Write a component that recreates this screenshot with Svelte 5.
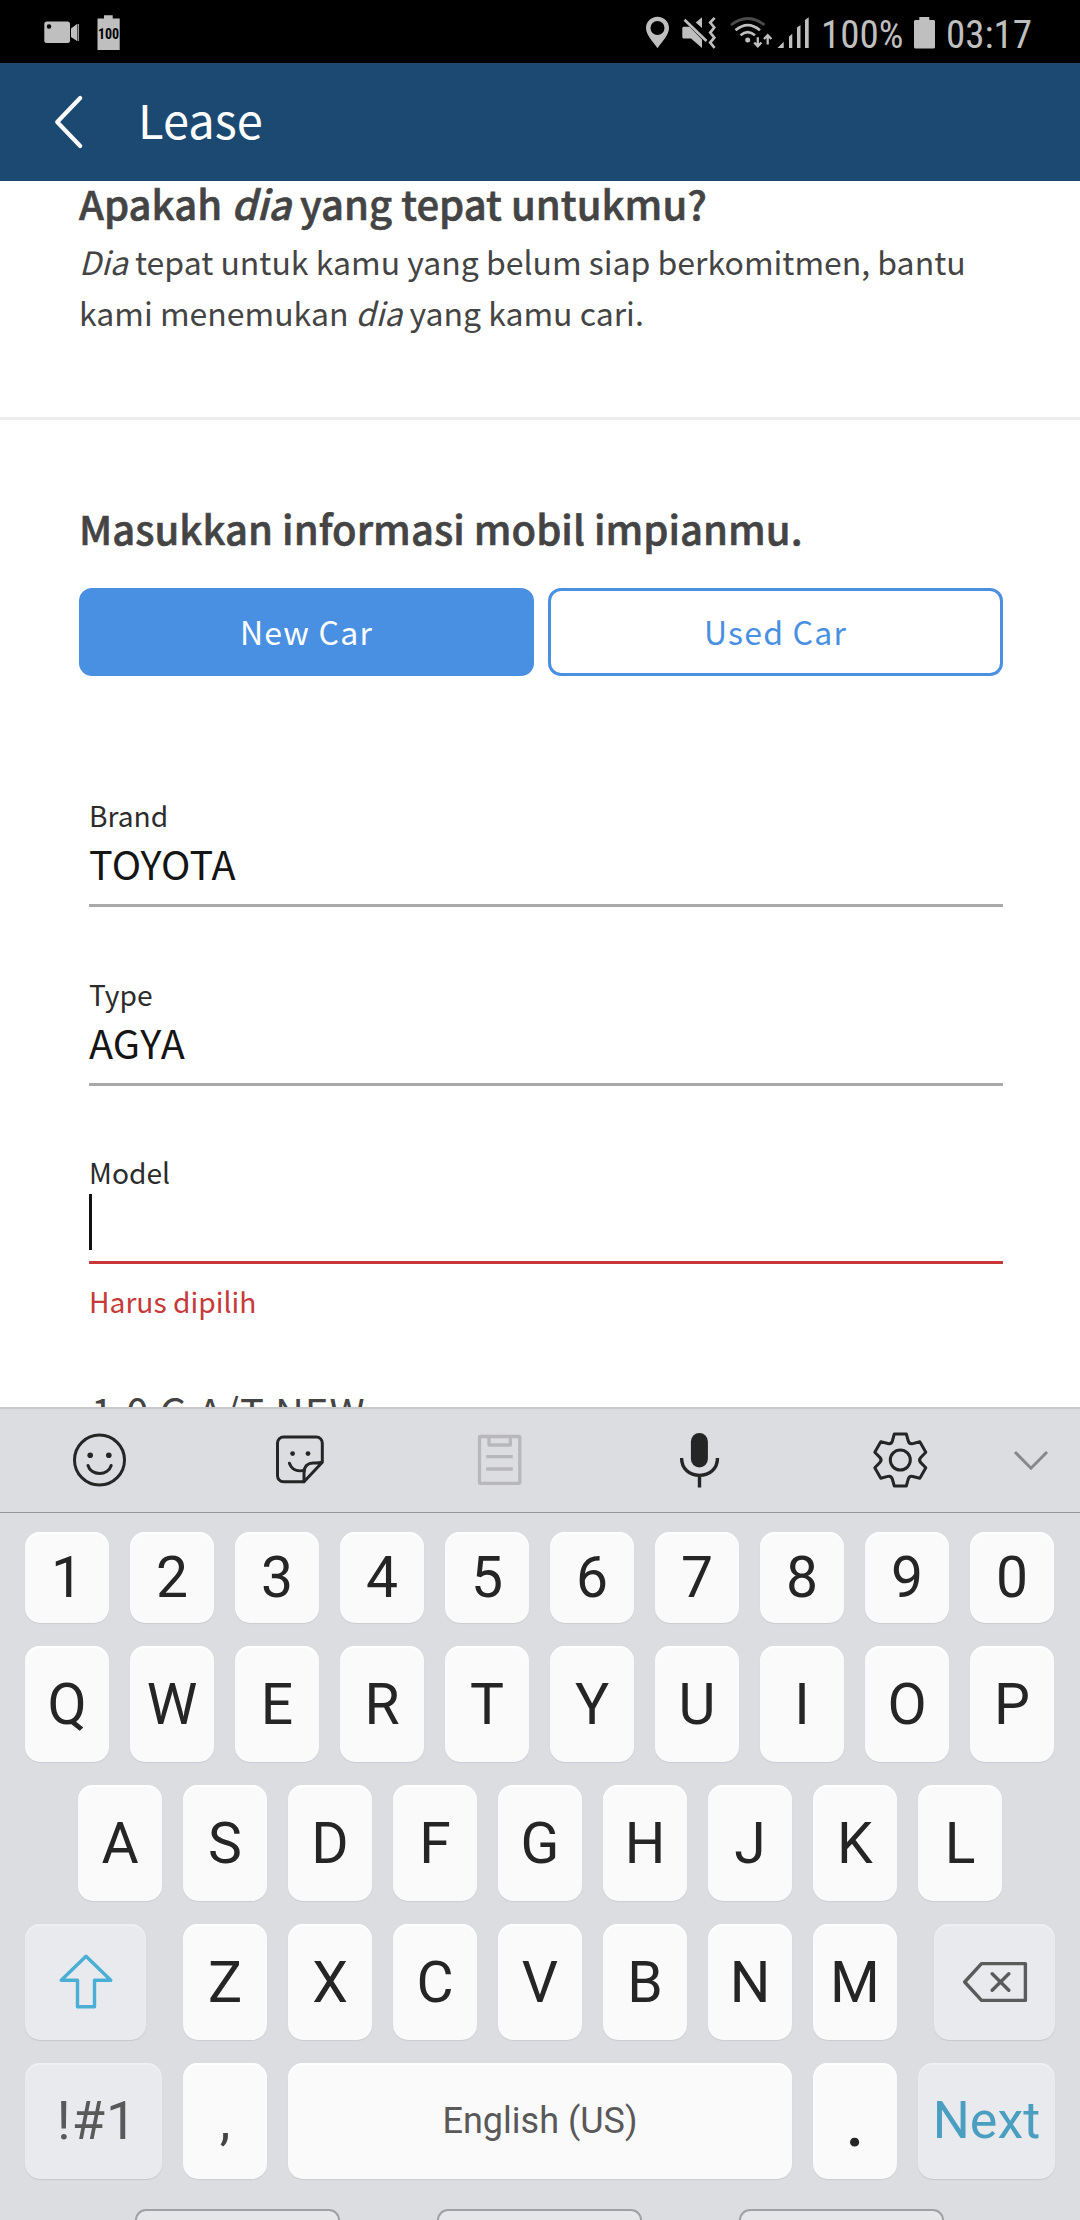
<script>
  const numbers = [...'1234567890'];
  const topRow = [...'QWERTYUIOP'];
  const homeRow = [...'ASDFGHJKL'];
  const lowerRow = [...'ZXCVBNM'];

  // Six-toothed gear outline, centred on the origin.
  const tooth = [[-6, -26], [6, -26], [8, -19], [9, -15.6], [12.5, -16.4]];
  const turn = ([x, y], i) => {
    const a = (i * Math.PI) / 3;
    return `${(x * Math.cos(a) - y * Math.sin(a)).toFixed(2)} ${(x * Math.sin(a) + y * Math.cos(a)).toFixed(2)}`;
  };
  const gear =
    [0, 1, 2, 3, 4, 5]
      .map((i) => {
        const p = tooth.map((t) => turn(t, i));
        return `${i ? 'L' : 'M'}${p[0]} L${p[1]} L${p[2]} Q${p[3]} ${p[4]}`;
      })
      .join(' ') + 'Z';
</script>

<div class="screen">
  <div class="status">
    <svg class="cam" width="36" height="40" viewBox="0 0 36 40">
      <path fill-rule="evenodd" d="M2.8 6.5H23.5a2.5 2.5 0 0 1 2.5 2.5V25.5a2.5 2.5 0 0 1-2.5 2.5H2.8A2.5 2.5 0 0 1 .3 25.5V9A2.5 2.5 0 0 1 2.8 6.5ZM5 9.2a2.3 2.3 0 1 0 0 4.6a2.3 2.3 0 0 0 0-4.6Z" />
      <path d="M27 13.5L33 9V26L27 22ZM33.6 9H34.8V26H33.6Z" />
    </svg>
    <svg class="batt-note" width="23" height="40" viewBox="0 0 23 40">
      <path d="M.5 3.5H7V.3H15.7V3.5H22.7V35H.5Z" />
      <text x="11.6" y="24.1" text-anchor="middle">100</text>
    </svg>
    <svg class="pin" width="24" height="40" viewBox="0 0 24 40">
      <path fill-rule="evenodd" d="M11.5 1.8C5 1.8 0 6.8 0 13C0 20 6.5 26 11.5 33.3C16.5 26 23 20 23 13C23 6.8 18 1.8 11.5 1.8ZM11.5 6a7 7 0 1 1 0 14a7 7 0 0 1 0-14Z" />
    </svg>
    <svg class="mute" width="34" height="40" viewBox="0 0 34 40">
      <path d="M1.3 11.8H7.5L20 24.5V33L9 23.5H1.3L.3 22.5V12.8ZM13.7 7.5L20 2.3V13Z" />
      <path class="line" d="M2.5 4.8L24.5 26M32.6 2.8L28.2 7.6L32.3 12.5L28.2 17.6L32.3 22.6L28.2 27.6L32.6 32.8" />
    </svg>
    <svg class="wifi" width="42" height="40" viewBox="0 0 42 40">
      <path class="line dim" d="M1 10Q17.7 -3 34.5 10" />
      <path class="line" d="M5.5 15.3Q17.7 5 30 15.3M10.5 20.3Q17.7 14 25 20.3" />
      <circle cx="17.7" cy="25" r="2.5" />
      <path class="line thin" d="M27.8 22.3V31M24.2 27.5L27.8 31.4L31.4 27.5M37.7 29.5V20.5M34 24L37.7 20.2L41.4 24" />
    </svg>
    <svg class="signal" width="32" height="40" viewBox="0 0 32 40">
      <path d="M.5 33H6.7V26.7ZM12 33V21.5L15.3 18.8V33ZM20 33V12.5L23.5 10V33ZM28 33V5L31.7 2.3V33Z" />
    </svg>
    <span class="percent">100%</span>
    <svg class="batt" width="21" height="40" viewBox="0 0 21 40">
      <path d="M1 5H5.3V2H15.3V5H20L21 6V32.5L20 33.5H1L0 32.5V6Z" />
    </svg>
    <span class="clock">03:17</span>
  </div>

  <header>
    <svg width="30" height="56" viewBox="0 0 30 56"><path d="M26.2 4L3.2 28L26.2 52" /></svg>
    <span class="title">Lease</span>
  </header>

  <main>
    <section class="intro">
      <h1>Apakah <em>dia</em> yang tepat untukmu?</h1>
      <p><em>Dia</em> tepat untuk kamu yang belum siap berkomitmen, bantu<br />kami menemukan <em>dia</em> yang kamu cari.</p>
    </section>
    <section class="form">
      <h2>Masukkan informasi mobil impianmu.</h2>
      <div class="toggle">
        <button class="on">New Car</button>
        <button>Used Car</button>
      </div>
      <div class="fields">
        <div class="field"><label for="brand">Brand</label><div class="value" id="brand">TOYOTA</div></div>
        <div class="field"><label for="type">Type</label><div class="value" id="type">AGYA</div></div>
        <div class="field error"><label for="model">Model</label><div class="value" id="model"><i class="caret"></i></div></div>
        <div class="message">Harus dipilih</div>
        <div class="option">1.0 G A/T NEW</div>
      </div>
    </section>
  </main>

  <div class="keyboard">
    <div class="tools">
      <svg viewBox="0 0 60 60">
        <circle cx="29.5" cy="30" r="25" />
        <path d="M18 35.5C21 46 38 46 41.2 35.5" />
        <circle class="fill" cx="20.2" cy="25.2" r="2.8" /><circle class="fill" cx="38.8" cy="25.2" r="2.8" />
      </svg>
      <svg viewBox="0 0 60 60">
        <path d="M34 51.8H13.5a6 6 0 0 1-6-6V13a6 6 0 0 1 6-6H46.3a6 6 0 0 1 6 6V32.2L34 51.8V43C34 36 38 33 43 33C47 33 50 33 52.3 32.2" />
        <path d="M19.4 33.2C21.5 39 27 42 34 40.4" />
        <circle class="fill" cx="22.6" cy="23.6" r="2.4" /><circle class="fill" cx="38" cy="23.6" r="2.4" />
      </svg>
      <svg class="off" viewBox="0 0 60 60">
        <rect x="9.5" y="6.5" width="40.3" height="46.8" rx="1" />
        <path d="M19 7V15H40.3V7M16.2 26.6H42.8M16.2 39H42.8" />
      </svg>
      <svg viewBox="0 0 60 60">
        <rect class="fill" x="20.9" y="3" width="17" height="34.5" rx="8.5" />
        <path class="butt" d="M11.6 28C11.6 39 19.5 45.4 29.5 45.4S47.5 39 47.5 28M29.5 45.4V57.5" />
      </svg>
      <svg viewBox="0 0 60 60">
        <g transform="translate(30.3 30)"><path d={gear} /><circle r="10" /></g>
      </svg>
      <svg class="hide" viewBox="0 0 60 60"><path d="M14 22L30 38.2L46 22" /></svg>
    </div>

    <div class="keys">
      <div class="row short">{#each numbers as k}<button class="key">{k}</button>{/each}</div>
      <div class="row">{#each topRow as k}<button class="key">{k}</button>{/each}</div>
      <div class="row home">{#each homeRow as k}<button class="key">{k}</button>{/each}</div>
      <div class="row">
        <button class="key fn shift" aria-label="Shift">
          <svg width="60" height="60" viewBox="0 0 60 60"><path d="M30 4.3L54.8 28.3H38.5V54.7H21.5V28.3H5.2Z" /></svg>
        </button>
        {#each lowerRow as k}<button class="key">{k}</button>{/each}
        <button class="key fn back" aria-label="Backspace">
          <svg width="68" height="48" viewBox="0 0 68 48"><path d="M3.7 24L20.5 5.6H64.4V42.4H20.5ZM31.2 15.8L47.8 32.3M47.8 15.8L31.2 32.3" /></svg>
        </button>
      </div>
      <div class="row">
        <button class="key fn sym">!#1</button>
        <button class="key comma">,</button>
        <button class="key space">English (US)</button>
        <button class="key dot">.</button>
        <button class="key fn next">Next</button>
      </div>
    </div>
    <div class="nav"><i></i><i></i><i></i></div>
  </div>
</div>

<style>
  :global(body) { margin: 0; background: #fff; }
  .screen {
    width: 1080px; height: 2220px; overflow: hidden; background: #fff;
    display: flex; flex-direction: column;
    font-family: "Noto Sans CJK JP", "Noto Sans", sans-serif;
  }
  .screen > * { flex-shrink: 0; }
  button { font: inherit; padding: 0; margin: 0; border: 0; }

  .status {
    height: 63px; box-sizing: border-box; padding: 7px 0 0 44px; background: #000; color: #bfbfbf;
    display: flex; align-items: center; overflow: hidden;
    font: 39px/50px "Roboto Condensed", Roboto, sans-serif;
  }
  .status > * { flex: none; }
  .status svg { fill: #bfbfbf; }
  .status .line { fill: none; stroke: #bfbfbf; stroke-width: 2.7; }
  .status .dim { stroke: #4a4a4a; }
  .status .thin { stroke-width: 2.3; }
  .status text { font: 700 14px "Roboto Condensed", Roboto, sans-serif; fill: #000; }
  .batt-note { margin-left: 17px; }
  .pin { margin-left: 526px; }
  .mute { margin-left: 12px; }
  .wifi { margin-left: 14px; }
  .signal { margin-left: 5px; }
  .percent { margin-left: 12px; width: 93px; }
  .clock { margin-left: 11px; }

  header {
    height: 118px; background: #1c4971; color: #fff;
    display: flex; align-items: center; padding-left: 54px; box-sizing: border-box;
  }
  header path { fill: none; stroke: #fafafa; stroke-width: 4.2; stroke-linecap: round; stroke-linejoin: round; }
  .title { font-size: 47px; line-height: 60px; margin-left: 54px; padding-bottom: 7px; }

  main { height: 1226px; overflow: hidden; color: #444; }
  .intro { padding: 0 79px 79px; border-bottom: 3px solid #ededed; }
  h1, h2 {
    margin: 0; font-size: 40px; font-weight: 500; letter-spacing: 0.04px;
    -webkit-text-stroke: 0.6px #444; white-space: nowrap;
  }
  h1 { line-height: 45px; }
  p { margin: 10px 0 0; font-size: 32px; line-height: 51px; white-space: nowrap; }
  .form { padding: 79px 77px 0 79px; }
  h2 { line-height: 58px; }
  .toggle { display: flex; gap: 14px; margin-top: 31px; }
  .toggle button {
    flex: 1; height: 88px; box-sizing: border-box; border: 3px solid #4a90e2; border-radius: 13px;
    background: #fff; color: #4a90e2; font-size: 32px; letter-spacing: 1.2px; padding-bottom: 3px;
  }
  .toggle .on { background: #4a90e2; color: #fff; }
  .fields { padding: 121px 0 0 10px; }
  .field { border-bottom: 3px solid #a9a9a9; padding-bottom: 13px; margin-bottom: 69px; }
  .field + .error { margin-top: -1px; margin-bottom: 0; border-color: #c93838; }
  label { display: block; font-size: 28.2px; line-height: 36px; color: #2c2c2c; }
  .value { margin-top: 2px; height: 56px; font-size: 39.6px; line-height: 56px; letter-spacing: 0.15px; color: #151515; }
  .caret { display: block; width: 3px; height: 56px; background: #111; position: relative; top: 2px; }
  .message { margin-top: 19px; font-size: 28.2px; line-height: 36px; color: #c63a3a; }
  .option { margin: 64px 0 0 2px; font-size: 40px; line-height: 56px; letter-spacing: 1px; }

  .keyboard { height: 813px; background: #dcdde1; overflow: hidden; font-family: Roboto, sans-serif; }
  .tools {
    height: 106px; box-sizing: border-box; border-top: 2px solid #c9c9cb; border-bottom: 1px solid #96969b;
    padding-bottom: 2px; display: grid; grid-template-columns: repeat(5, 200px) 62px;
    align-items: center; justify-items: center;
  }
  .tools svg { width: 60px; height: 60px; fill: none; stroke: #252525; stroke-width: 3; stroke-linecap: round; stroke-linejoin: round; }
  .tools .fill { fill: #252525; stroke: none; }
  .tools .butt { stroke-linecap: butt; stroke-width: 3.4; }
  .tools .off { stroke: #b8b8bb; stroke-width: 3.3; stroke-linecap: butt; }
  .tools .hide { stroke: #88888b; stroke-linecap: butt; stroke-linejoin: miter; }

  .keys { padding-top: 19px; display: flex; flex-direction: column; gap: 23px; }
  .row { display: flex; gap: 21px; height: 116px; padding-left: 25px; }
  .home { padding-left: 78px; }
  .short { height: 91px; }
  .key {
    width: 84px; height: 100%; flex: none; border-radius: 15px; background: #fafafa; color: #252525;
    font-size: 57px; line-height: 1; display: flex; align-items: center; justify-content: center;
    box-shadow: 0 1px 1px #cbccd0, inset 0 2px 1px #fff;
  }
  .fn { background: #e9eaee; color: #595959; box-shadow: 0 1px 1px #c6c7cb, inset 0 2px 1px #eff0f2; }
  .fn svg { fill: none; stroke: #5b5b5b; stroke-width: 3.4; stroke-linejoin: round; stroke-linecap: round; }
  .shift { width: 121px; margin-right: 16px; }
  .fn.shift svg { stroke: #4bafd5; }
  .back { width: 121px; margin-left: 16px; }
  .sym, .next { width: 137px; }
  .sym { font-size: 54px; letter-spacing: 1px; padding-left: 7px; box-sizing: border-box; }
  .next { font-size: 52px; color: #4a9fc0; }
  .comma { color: #444; font-size: 54px; }
  .dot { font-size: 66px; font-weight: 500; padding-top: 5px; box-sizing: border-box; }
  .space { width: 504px; font-size: 36px; color: #595959; }
  .nav { margin: 30px 0 0 135px; display: flex; gap: 97px; }
  .nav i { width: 205px; height: 60px; box-sizing: border-box; border: 2px solid #a0a1a4; border-radius: 11px; background: #e6e7e9; }
</style>
